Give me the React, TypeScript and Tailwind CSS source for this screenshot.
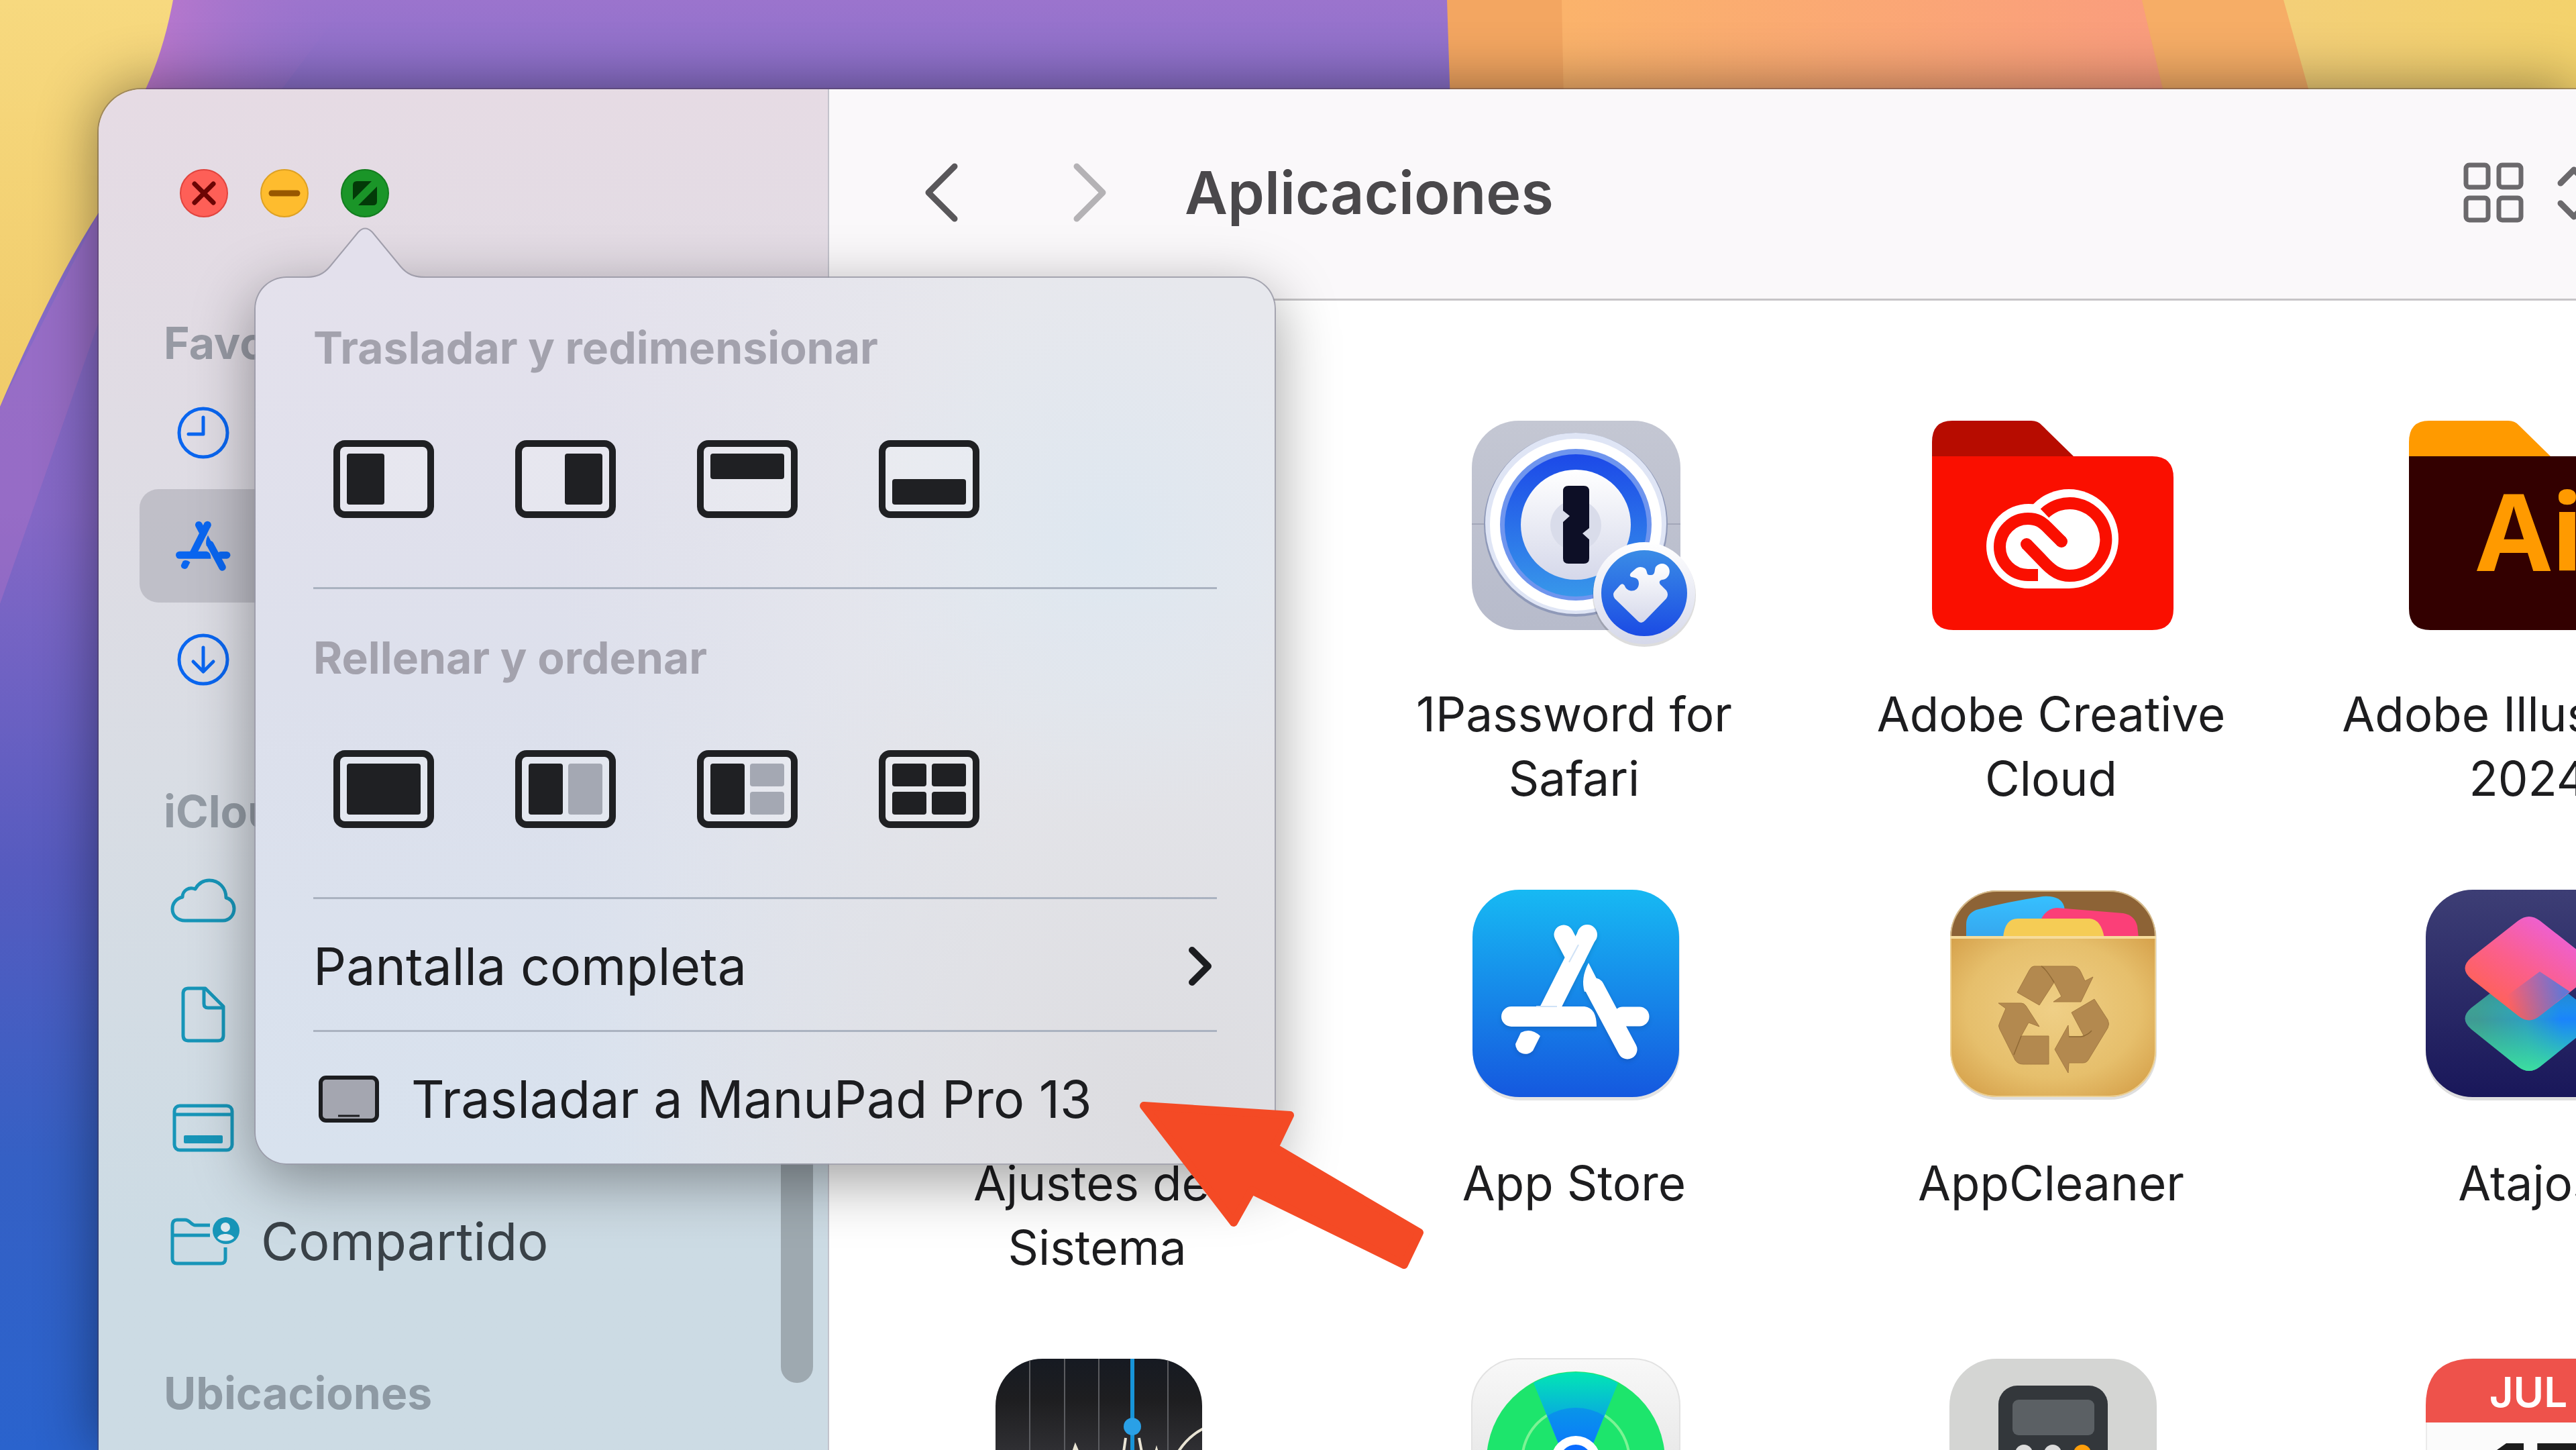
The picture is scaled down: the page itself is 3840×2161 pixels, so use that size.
import type { ReactNode } from 'react';

const sidebarFavorites = [
  { name: 'Recientes', icon: <ClockIcon />, active: false },
  { name: 'Aplicaciones', icon: <AppsIcon />, active: true },
  { name: 'Descargas', icon: <DownloadIcon />, active: false },
];

const sidebarCloud = [
  { name: 'iCloud Drive', icon: <CloudIcon /> },
  { name: 'Documentos', icon: <DocumentIcon /> },
  { name: 'Escritorio', icon: <DesktopIcon /> },
];

const apps: { name: string; icon: ReactNode }[] = [
  { name: '', icon: null },
  { name: '1Password for Safari', icon: <OnePasswordIcon /> },
  { name: 'Adobe Creative Cloud', icon: <CreativeCloudIcon /> },
  { name: 'Adobe Illustrator 2024', icon: <IllustratorIcon /> },
  { name: 'Ajustes del Sistema', icon: null },
  { name: 'App Store', icon: <AppStoreIcon /> },
  { name: 'AppCleaner', icon: <AppCleanerIcon /> },
  { name: 'Atajos', icon: <ShortcutsIcon /> },
  { name: 'Bolsa', icon: <StocksIcon /> },
  { name: 'Buscar', icon: <FindMyIcon /> },
  { name: 'Calculadora', icon: <CalculatorIcon /> },
  { name: 'Calendario', icon: <CalendarIcon /> },
];

// [x, y, width, height, dimmed]
type Pane = [number, number, number, number, boolean?];

const moveLayouts: { label: string; panes: Pane[] }[] = [
  { label: 'Izquierda', panes: [[20, 20, 56, 76]] },
  { label: 'Derecha', panes: [[74, 20, 56, 76]] },
  { label: 'Arriba', panes: [[20, 20, 110, 38]] },
  { label: 'Abajo', panes: [[20, 58, 110, 38]] },
];

const fillLayouts: { label: string; panes: Pane[] }[] = [
  { label: 'Rellenar', panes: [[20, 20, 110, 76]] },
  { label: 'Izquierda y derecha', panes: [[20, 20, 51, 76], [79, 20, 51, 76, true]] },
  { label: 'Izquierda y cuartos', panes: [[20, 20, 51, 76], [79, 20, 51, 34, true], [79, 62, 51, 34, true]] },
  { label: 'Cuartos', panes: [[20, 20, 51, 34], [79, 20, 51, 34], [20, 62, 51, 34], [79, 62, 51, 34]] },
];

function ClockIcon() {
  return (
    <svg viewBox="0 0 80 80" className="size-20" fill="none" stroke="#0a66f0" strokeWidth="5" strokeLinecap="round" strokeLinejoin="round">
      <circle cx="40" cy="40" r="36" />
      <path d="M40 17v25H18" />
    </svg>
  );
}

function AppsGlyph() {
  return (
    <>
      <path d="M162 67L180 101" stroke="currentColor" strokeWidth="29" strokeLinecap="round" />
      <path d="M197 67L137 186" stroke="currentColor" strokeWidth="29" />
      <circle cx="197" cy="67" r="15" fill="currentColor" />
      <path d="M208 146L257 238" stroke="currentColor" strokeWidth="29" strokeLinecap="round" />
      <path d="M199 109Q187 132 193 152L212 150L221 152Z" fill="currentColor" />
      <path d="M84 174H193Q211 176 211 204H84A15 15 0 0 1 84 174Z" fill="currentColor" />
      <path d="M250 189H275" stroke="currentColor" strokeWidth="29" strokeLinecap="round" />
      <path d="M98 213Q113 205 127 218L116 240A15 15 0 0 1 90 230Z" fill="currentColor" />
    </>
  );
}

function AppsIcon() {
  return (
    <svg viewBox="69 50 222 206" className="h-19 w-21 text-[#0a66f0]" fill="none">
      <AppsGlyph />
    </svg>
  );
}

function DownloadIcon() {
  return (
    <svg viewBox="0 0 80 80" className="size-20" fill="none" stroke="#0a66f0" strokeWidth="5" strokeLinecap="round" strokeLinejoin="round">
      <circle cx="40" cy="40" r="36" />
      <path d="M40 22v35M25 43l15 15 15-15" />
    </svg>
  );
}

function CloudIcon() {
  return (
    <svg viewBox="0 0 98 70" className="h-[70px] w-[98px]" fill="none" stroke="#1795b8" strokeWidth="5" strokeLinejoin="round">
      <path d="M22 64C10 64 3 56 3 47C3 38 9 31 18 29C18 19 28 13 37 17C42 8 50 4 58 4C72 4 83 15 83 30C91 32 95 39 95 46C95 56 88 64 78 64Z" />
    </svg>
  );
}

function DocumentIcon() {
  return (
    <svg viewBox="0 0 68 86" className="h-[86px] w-[68px]" fill="none" stroke="#1795b8" strokeWidth="5" strokeLinejoin="round">
      <path d="M12 4H37L64 31V74Q64 82 56 82H12Q4 82 4 74V12Q4 4 12 4Z" />
      <path d="M35 5V27Q35 33 41 33H63" />
    </svg>
  );
}

function DesktopIcon() {
  return (
    <svg viewBox="0 0 92 72" className="h-[72px] w-[92px]" fill="none" stroke="#1795b8" strokeWidth="5">
      <rect x="3" y="3" width="86" height="66" rx="8" />
      <path d="M3 16H89" />
      <rect x="17" y="47" width="58" height="12" rx="2" fill="#1795b8" stroke="none" />
    </svg>
  );
}

function SharedFolderIcon() {
  return (
    <svg viewBox="0 0 104 74" className="h-[74px] w-[104px]" fill="none" stroke="#1795b8" strokeWidth="5" strokeLinejoin="round">
      <path d="M60 13H38C32 13 30 5 23 5H11Q4 5 4 13V63Q4 70 11 70H76Q83 70 83 63V46" />
      <path d="M4 28H60" />
      <circle cx="84" cy="21" r="20" fill="#1795b8" stroke="none" />
      <circle cx="83" cy="16" r="7" fill="#dce8ee" stroke="none" />
      <path d="M71 32C74 24 92 24 96 32C90 38 77 38 71 32Z" fill="#dce8ee" stroke="none" />
    </svg>
  );
}

function LayoutIcon({ panes }: { panes: Pane[] }) {
  return (
    <svg viewBox="0 0 150 116" className="h-[116px] w-[150px]">
      <rect x="5" y="5" width="140" height="106" rx="12" fill="#ffffff33" stroke="#1f2023" strokeWidth="10" />
      {panes.map(([x, y, w, h, dim], i) => (
        <rect key={i} x={x} y={y} width={w} height={h} rx="4" fill={dim ? '#a4a8b3' : '#1f2023'} />
      ))}
    </svg>
  );
}

function AppCanvas({ children }: { children?: ReactNode }) {
  return (
    <svg viewBox="0 0 360 312" className="h-[312px] w-[360px] overflow-visible" fill="none">
      {children}
    </svg>
  );
}

function OnePasswordIcon() {
  return (
    <AppCanvas>
      <defs>
        <linearGradient id="op-bg" x1="0" y1="0" x2="0" y2="1">
          <stop offset="0" stopColor="#c4c7d3" />
          <stop offset="1" stopColor="#b7bbcb" />
        </linearGradient>
        <linearGradient id="op-ring" x1="0" y1="0" x2="0" y2="1">
          <stop offset="0" stopColor="#1c49e8" />
          <stop offset="1" stopColor="#3897ea" />
        </linearGradient>
        <linearGradient id="op-face" x1="0" y1="0" x2="0" y2="1">
          <stop offset="0" stopColor="#ffffff" />
          <stop offset="1" stopColor="#d5d8ea" />
        </linearGradient>
        <linearGradient id="op-badge" x1="0" y1="0" x2="0" y2="1">
          <stop offset="0" stopColor="#3a8ce6" />
          <stop offset="1" stopColor="#1b4be4" />
        </linearGradient>
      </defs>
      <rect x="25" y="0" width="311" height="312" rx="70" fill="url(#op-bg)" />
      <path d="M25 154H336" stroke="#a3a7b8" strokeWidth="2" />
      <circle cx="180" cy="155" r="137" fill="#8f99b8" />
      <circle cx="180" cy="153" r="135" fill="#dfe5f5" />
      <circle cx="180" cy="155" r="128" fill="#ffffff" />
      <circle cx="180" cy="155" r="113" fill="#6f95ee" />
      <circle cx="180" cy="156" r="106" fill="url(#op-ring)" />
      <circle cx="180" cy="155" r="82" fill="url(#op-face)" />
      <circle cx="180" cy="156" r="38" fill="#d9dcea" />
      <path
        d="M169 97H192Q200 97 200 105V160L190 168L200 177V205Q200 213 192 213H169Q161 213 161 205V151L171 142L161 134V105Q161 97 169 97Z"
        fill="#0d0f26"
      />
      <circle cx="282" cy="260" r="77" fill="#00000022" />
      <circle cx="282" cy="257" r="76" fill="url(#op-face)" />
      <circle cx="282" cy="257" r="64" fill="url(#op-badge)" />
      <path
        d="M272 298L238 265Q234 259 238 254L246 245Q250 241 253 246C256 256 273 257 274 243C274 234 268 234 263 233Q259 231 262 227L270 220Q276 216 283 220C288 225 284 231 292 230C299 230 297 222 299 218C304 212 312 211 317 217C323 224 319 236 309 237C303 238 304 243 308 246L315 253Q319 259 315 265L283 298Q277 304 272 298Z"
        fill="url(#op-face)"
      />
    </AppCanvas>
  );
}

function Folder({ tab, body, children }: { tab: string; body: string; children: ReactNode }) {
  return (
    <AppCanvas>
      <path d="M0 60V32Q0 0 30 0H148Q158 0 164 7L211 53V60Z" fill={tab} />
      <path d="M0 53H328Q360 53 360 85V280Q360 312 328 312H32Q0 312 0 280Z" fill={body} />
      {children}
    </AppCanvas>
  );
}

function CreativeCloudIcon() {
  return (
    <Folder tab="#b70c00" body="#fa0f00">
      <circle cx="204" cy="176" r="74" fill="#fff" />
      <circle cx="144" cy="187" r="63" fill="#fff" />
      <path d="M144 200H204V250H144Z" fill="#fff" />
      <path d="M168 138A54 54 0 1 1 205 231C190 231 180 224 170 214L141 184" stroke="#fa0f00" strokeWidth="18" />
      <path d="M158 230H143A42 42 0 0 1 143 146C157 146 164 151 172 159L193 180" stroke="#fa0f00" strokeWidth="18" />
      <circle cx="141" cy="184" r="9" fill="#fa0f00" />
      <circle cx="193" cy="180" r="9" fill="#fa0f00" />
    </Folder>
  );
}

function IllustratorIcon() {
  return (
    <Folder tab="#ff9a00" body="#330000">
      <text x="101" y="224" fill="#ff9a00" className="font-['Open_Sans',sans-serif] text-[160px] font-bold">
        Ai
      </text>
    </Folder>
  );
}

function AppStoreIcon() {
  return (
    <AppCanvas>
      <defs>
        <linearGradient id="as-bg" x1="0" y1="0" x2="0" y2="1">
          <stop offset="0" stopColor="#17b9f3" />
          <stop offset="1" stopColor="#1558df" />
        </linearGradient>
      </defs>
      <rect x="27" y="5" width="308" height="309" rx="70" fill="#0000001c" />
      <rect x="26" y="0" width="308" height="309" rx="70" fill="url(#as-bg)" />
      <g className="text-white drop-shadow-md">
        <AppsGlyph />
        <path d="M170 108L184 82M121 174H152" stroke="#cfe2f6" strokeWidth="2" />
      </g>
    </AppCanvas>
  );
}

function AppCleanerIcon() {
  return (
    <AppCanvas>
      <defs>
        <clipPath id="ac-clip">
          <rect x="27" y="1" width="307" height="308" rx="70" />
        </clipPath>
        <radialGradient id="ac-bag" cx="0.5" cy="0.45" r="0.7">
          <stop offset="0" stopColor="#efcf86" />
          <stop offset="0.6" stopColor="#e6bf6c" />
          <stop offset="1" stopColor="#d39c45" />
        </radialGradient>
        <linearGradient id="ac-blue" x1="0" y1="0" x2="0" y2="1">
          <stop offset="0" stopColor="#36c0ff" />
          <stop offset="1" stopColor="#36a6ee" />
        </linearGradient>
      </defs>
      <rect x="28" y="5" width="307" height="308" rx="70" fill="#00000020" />
      <g clipPath="url(#ac-clip)">
        <rect x="27" y="0" width="307" height="80" fill="#8d6336" />
        <path d="M51 72V52Q51 36 66 30Q112 18 165 10Q192 8 197 25L205 72Z" fill="url(#ac-blue)" />
        <path d="M160 50Q168 28 186 27L285 35Q302 38 306 54L308 72H160Z" fill="#fb3f78" />
        <path d="M106 72Q108 43 128 43H235Q252 44 257 72Z" fill="#f5cc55" />
        <rect x="27" y="69" width="307" height="243" fill="url(#ac-bag)" />
        <path d="M27 71H334" stroke="#f6dc9b" strokeWidth="4" />
      </g>
      <rect x="28" y="2" width="305" height="306" rx="69" stroke="#f3e0ae" strokeOpacity="0.7" strokeWidth="2" />
      <g fill="#b3894f" stroke="#a47a42" strokeWidth="1">
        <path d="M152 114H210Q218 114 222 123L228 136L240 130L222 167H181L193 159L182 138L160 172L127 153L145 120Q148 114 152 114Z" />
        <path d="M242 163L262 194Q265 200 262 206L234 252Q231 258 225 258H204L203 273L183 238L203 202L204 219H227L208 183Z" />
        <path d="M99 169H133Q137 169 140 173L160 204L144 198L133 218H174V260H136Q128 260 124 254L101 208Q98 203 101 198L110 177Z" />
      </g>
      <path d="M163 114Q170 118 182 138M133 218L122 246M204 219L222 219Q232 217 238 210" stroke="#8f6935" strokeWidth="1.5" />
    </AppCanvas>
  );
}

function ShortcutsIcon() {
  return (
    <AppCanvas>
      <defs>
        <linearGradient id="sc-bg" x1="0" y1="0" x2="0" y2="1">
          <stop offset="0" stopColor="#3d3e75" />
          <stop offset="1" stopColor="#19175a" />
        </linearGradient>
        <linearGradient id="sc-top" x1="0.1" y1="0.8" x2="0.7" y2="0.1">
          <stop offset="0" stopColor="#ff6250" />
          <stop offset="0.5" stopColor="#fb5f8c" />
          <stop offset="1" stopColor="#ee60d2" />
        </linearGradient>
        <linearGradient id="sc-low" x1="0.1" y1="0.5" x2="0.9" y2="0.4">
          <stop offset="0" stopColor="#3f9a94" />
          <stop offset="0.45" stopColor="#2f9fc0" />
          <stop offset="0.8" stopColor="#1a84fb" />
        </linearGradient>
        <linearGradient id="sc-green" x1="0" y1="0" x2="0" y2="1">
          <stop offset="0" stopColor="#33336e" stopOpacity="0.7" />
          <stop offset="0.5" stopColor="#34e09a" stopOpacity="0" />
          <stop offset="1" stopColor="#3ee59c" stopOpacity="0.9" />
        </linearGradient>
        <linearGradient id="sc-cross" x1="0.1" y1="0.5" x2="0.9" y2="0.4">
          <stop offset="0" stopColor="#5a6cc0" stopOpacity="0" />
          <stop offset="1" stopColor="#4a7be0" stopOpacity="0.85" />
        </linearGradient>
      </defs>
      <rect x="25" y="5" width="310" height="309" rx="70" fill="#00000022" />
      <rect x="25" y="0" width="310" height="309" rx="70" fill="url(#sc-bg)" />
      <path d="M163 122Q179 110 195 122L265 176Q284 192 265 208L195 264Q179 276 163 264L93 208Q74 192 93 176Z" fill="url(#sc-low)" />
      <path d="M163 122Q179 110 195 122L265 176Q284 192 265 208L195 264Q179 276 163 264L93 208Q74 192 93 176Z" fill="url(#sc-green)" />
      <path d="M163 46Q179 34 195 46L265 101Q284 117 265 133L195 188Q179 201 163 188L93 133Q74 117 93 101Z" fill="url(#sc-top)" />
      <path d="M195 122L240 152L195 188Q179 201 163 188L135 166Z" fill="url(#sc-cross)" />
    </AppCanvas>
  );
}

function StocksIcon() {
  return (
    <AppCanvas>
      <defs>
        <clipPath id="st-clip">
          <rect x="26" y="0" width="308" height="309" rx="70" />
        </clipPath>
        <linearGradient id="st-bg" x1="0" y1="0" x2="0" y2="1">
          <stop offset="0" stopColor="#161a22" />
          <stop offset="0.2" stopColor="#1e1e20" />
          <stop offset="0.6" stopColor="#3a3a3f" />
        </linearGradient>
      </defs>
      <g clipPath="url(#st-clip)">
        <rect x="26" y="0" width="308" height="309" fill="url(#st-bg)" />
        <path d="M77 0V309M129 0V309M180 0V309M283 0V309" stroke="#5b5c60" strokeWidth="2" />
        <path d="M230 0V309" stroke="#1794d8" strokeWidth="6" />
        <path d="M135 160L145 130L158 160M214 160L220 118M240 118L248 160M262 150L266 136L270 150M292 150Q308 118 336 104" stroke="#e9e4d4" strokeWidth="4" />
        <circle cx="230" cy="101" r="13" fill="#2aa0e6" />
      </g>
    </AppCanvas>
  );
}

function FindMyIcon() {
  return (
    <AppCanvas>
      <defs>
        <linearGradient id="fm-bg" x1="0" y1="0" x2="0" y2="1">
          <stop offset="0" stopColor="#f8f8f8" />
          <stop offset="1" stopColor="#d8d8d8" />
        </linearGradient>
        <linearGradient id="fm-beam" x1="0" y1="0" x2="0" y2="1">
          <stop offset="0" stopColor="#02e6b4" />
          <stop offset="0.5" stopColor="#0a9bea" />
          <stop offset="0.8" stopColor="#0a6cff" />
        </linearGradient>
      </defs>
      <rect x="25" y="0" width="310" height="309" rx="70" fill="url(#fm-bg)" stroke="#e2e2e2" strokeWidth="2" />
      <circle cx="180" cy="152" r="133" fill="#1de56c" />
      <circle cx="180" cy="152" r="80" stroke="#7cf394" strokeWidth="4" />
      <path d="M180 190L117 36A133 133 0 0 1 243 36Z" fill="url(#fm-beam)" />
      <path d="M180 190L138 85A80 80 0 0 1 222 85Z" fill="#0a6cff" fillOpacity="0.45" />
      <circle cx="180" cy="152" r="37" fill="#fff" />
      <circle cx="180" cy="152" r="24" fill="#0a6cff" />
    </AppCanvas>
  );
}

function CalculatorIcon() {
  return (
    <AppCanvas>
      <rect x="26" y="0" width="309" height="309" rx="70" fill="#d4d5d3" />
      <rect x="99" y="40" width="163" height="260" rx="28" fill="#33373b" />
      <rect x="120" y="61" width="122" height="53" rx="9" fill="#5b6064" />
      <circle cx="137" cy="141" r="13" fill="#dcdcdc" />
      <circle cx="180" cy="141" r="13" fill="#dcdcdc" />
      <circle cx="224" cy="141" r="13" fill="#ff9f0a" />
    </AppCanvas>
  );
}

function CalendarIcon() {
  return (
    <AppCanvas>
      <rect x="26" y="0" width="309" height="309" rx="70" fill="#fbfbfb" stroke="#d9d9d9" strokeWidth="1" />
      <path d="M25 95V70Q25 0 95 0H265Q335 0 335 70V95Z" fill="#ee524b" />
      <text x="178" y="72" textAnchor="middle" fill="#fff" className="text-[62px] font-semibold">
        JUL
      </text>
      <text x="108" y="257" fill="#1c1c1c" className="text-[180px] font-semibold">
        17
      </text>
    </AppCanvas>
  );
}

function Wallpaper() {
  return (
    <svg viewBox="0 0 3840 2161" preserveAspectRatio="xMidYMin slice" className="absolute inset-0 size-full">
      <defs>
        <linearGradient id="wp-blue" x1="0" y1="0" x2="0" y2="1">
          <stop offset="0" stopColor="#9b74cd" />
          <stop offset="0.07" stopColor="#886fca" />
          <stop offset="0.35" stopColor="#8568c6" />
          <stop offset="0.6" stopColor="#565bbf" />
          <stop offset="0.8" stopColor="#3560c4" />
          <stop offset="1" stopColor="#2a63cd" />
        </linearGradient>
        <linearGradient id="wp-edge" x1="0" y1="0" x2="1" y2="0">
          <stop offset="0" stopColor="#c078cc" stopOpacity="0.9" />
          <stop offset="1" stopColor="#9b74cd" stopOpacity="0" />
        </linearGradient>
        <linearGradient id="wp-yellow" x1="0" y1="0" x2="0" y2="1">
          <stop offset="0" stopColor="#f7d97f" />
          <stop offset="1" stopColor="#f0cb6a" />
        </linearGradient>
        <linearGradient id="wp-orange" x1="0" y1="0" x2="1" y2="0">
          <stop offset="0" stopColor="#fbb36b" />
          <stop offset="1" stopColor="#fa9c7e" />
        </linearGradient>
        <linearGradient id="wp-right" x1="0" y1="0" x2="1" y2="0">
          <stop offset="0" stopColor="#f3cf78" />
          <stop offset="1" stopColor="#f3d26c" />
        </linearGradient>
      </defs>
      <rect width="3840" height="2161" fill="url(#wp-blue)" />
      <path d="M258 0H520L420 133H217Z" fill="url(#wp-edge)" />
      <path d="M147 317V480Q70 700 0 900V606Z" fill="#a86fc6" fillOpacity="0.5" />
      <path d="M0 0H258Q244 75 217 133Q190 230 147 317Q80 420 0 606Z" fill="url(#wp-yellow)" />
      <path d="M2157 0H3840V400H2170Z" fill="#f3a661" />
      <path d="M2328 0H3193L3240 200H2332Z" fill="url(#wp-orange)" />
      <path d="M3193 0H3404L3460 200H3240Z" fill="#f6ad66" />
      <path d="M3404 0H3840V200H3460Z" fill="url(#wp-right)" />
    </svg>
  );
}

function TrafficLights() {
  return (
    <div className="flex gap-12 pt-[119px] pl-[121px]">
      <button aria-label="Cerrar" className="size-18">
        <svg viewBox="0 0 72 72" className="size-18">
          <circle cx="36" cy="36" r="35" fill="#fe5f57" stroke="#e0443e" strokeWidth="2" />
          <path d="M22 22L50 50M50 22L22 50" stroke="#6c0504" strokeWidth="7" strokeLinecap="round" />
        </svg>
      </button>
      <button aria-label="Minimizar" className="size-18">
        <svg viewBox="0 0 72 72" className="size-18">
          <circle cx="36" cy="36" r="35" fill="#febc2e" stroke="#dea123" strokeWidth="2" />
          <path d="M17 36H55" stroke="#985700" strokeWidth="9" strokeLinecap="round" />
        </svg>
      </button>
      <button aria-label="Zoom" className="size-18">
        <svg viewBox="0 0 72 72" className="size-18">
          <circle cx="36" cy="36" r="35" fill="#1a9528" stroke="#137c1f" strokeWidth="2" />
          <path d="M18 46V24Q18 18 24 18H46Z" fill="#033a08" />
          <path d="M54 26V48Q54 54 48 54H26Z" fill="#033a08" />
        </svg>
      </button>
    </div>
  );
}

function SidebarHeading({ children }: { children: ReactNode }) {
  return <h2 className="mb-[9px] pl-[97px] text-[66px] leading-20 font-bold text-[#5b6470]/55">{children}</h2>;
}

function Sidebar() {
  return (
    <aside className="relative w-[1089px] shrink-0 overflow-hidden border-r-2 border-[#c3c3cc] bg-linear-to-b from-[#e6dbe4] via-[#d9dde4] via-50% to-[#ccdbe4] to-85%">
      <TrafficLights />
      <nav className="mt-[147px]">
        <SidebarHeading>Favoritos</SidebarHeading>
        {sidebarFavorites.map((item) => (
          <a
            key={item.name}
            href="#"
            aria-label={item.name}
            className={`mx-[61px] flex h-[169px] items-center rounded-[28px] pl-[45px] ${item.active ? 'bg-[#4b4b5a]/20' : ''}`}
          >
            <span className="flex w-25 justify-center">{item.icon}</span>
          </a>
        ))}
        <div className="h-[102px]" />
        <SidebarHeading>iCloud</SidebarHeading>
        {sidebarCloud.map((item) => (
          <a key={item.name} href="#" aria-label={item.name} className="mx-[61px] flex h-[169px] items-center pl-[45px]">
            <span className="flex w-25 justify-center">{item.icon}</span>
          </a>
        ))}
        <a href="#" className="mx-[61px] flex h-[169px] items-center gap-8 pl-[45px] text-[77px] leading-[92px] text-[#3a4248]">
          <SharedFolderIcon />
          Compartido
        </a>
        <div className="h-[102px]" />
        <SidebarHeading>Ubicaciones</SidebarHeading>
      </nav>
      <div className="absolute top-[900px] right-[22px] h-[1028px] w-12 rounded-full bg-[#9ea9b0]" />
    </aside>
  );
}

function Toolbar() {
  return (
    <header className="flex h-[315px] items-center border-b-3 border-[#c6c4c7] bg-[#faf8fa] pb-1 pl-[138px]">
      <button aria-label="Atrás">
        <svg viewBox="0 0 60 96" className="h-24 w-15" fill="none" stroke="#59575a" strokeWidth="9" strokeLinecap="round" strokeLinejoin="round">
          <path d="M49 9L10 48L49 87" />
        </svg>
      </button>
      <button aria-label="Adelante" className="ml-40">
        <svg viewBox="0 0 60 96" className="h-24 w-15" fill="none" stroke="#b4b2b5" strokeWidth="9" strokeLinecap="round" strokeLinejoin="round">
          <path d="M11 9L50 48L11 87" />
        </svg>
      </button>
      <h1 className="ml-28 flex-1 text-[88px] leading-24 font-semibold text-[#4a484b]">Aplicaciones</h1>
      <button aria-label="Vista" className="-mr-[22px] flex items-center gap-12">
        <svg viewBox="0 0 90 90" className="size-[90px]" fill="none" stroke="#6b696c" strokeWidth="7">
          <rect x="4" y="4" width="33" height="33" rx="5" />
          <rect x="53" y="4" width="33" height="33" rx="5" />
          <rect x="4" y="53" width="33" height="33" rx="5" />
          <rect x="53" y="53" width="33" height="33" rx="5" />
        </svg>
        <svg viewBox="0 0 52 90" className="h-[90px] w-[52px]" fill="none" stroke="#6b696c" strokeWidth="9" strokeLinecap="round" strokeLinejoin="round">
          <path d="M7 31L27 11L47 31M7 61L27 81L47 61" />
        </svg>
      </button>
    </header>
  );
}

function AppGrid() {
  return (
    <ul className="grid grid-cols-[repeat(4,711px)] auto-rows-[699px] pt-[179px] pl-[46px]">
      {apps.map((app, i) => (
        <li key={i} className="flex flex-col items-center gap-[77px]">
          {app.icon ?? <AppCanvas />}
          <span className="w-[600px] pr-1 text-center text-[71px] leading-24 text-[#1d1d1f]">{app.name}</span>
        </li>
      ))}
    </ul>
  );
}

function LayoutRow({ title, layouts }: { title: string; layouts: { label: string; panes: Pane[] }[] }) {
  return (
    <section className="border-b-3 border-[#aab2c0] pt-[62px] pb-[103px]">
      <h3 className="mb-[98px] text-[66px] leading-20 font-bold text-[#a3a2ad]">{title}</h3>
      <div className="flex gap-[121px] pl-[30px]">
        {layouts.map((layout) => (
          <button key={layout.label} aria-label={layout.label}>
            <LayoutIcon panes={layout.panes} />
          </button>
        ))}
      </div>
    </section>
  );
}

function ZoomMenu() {
  return (
    <div className="absolute top-[279px] left-[232px] w-[1523px] rounded-[48px] border-2 border-[#8f8f9c]/80 bg-[radial-gradient(circle_at_84%_30%,#dee7f0_0,#dee7f000_26%),radial-gradient(circle_at_90%_95%,#dcdce0_0,#dcdce000_45%),linear-gradient(to_right,#e3e1ec00_30%,#e7e8ed_75%),linear-gradient(to_bottom,#e4e1ec,#dde0ec_45%,#d8e2ee)] bg-clip-padding px-[86px] pt-[2px] shadow-[0_24px_90px_rgba(0,0,0,0.38)]">
      <svg viewBox="0 0 178 82" className="absolute -top-[79px] left-[75px] h-[82px] w-[178px]" fill="none">
        <path d="M0 79C16 79 26 74 36 62L78 11Q88 0 99 11L141 62C151 74 161 79 178 79V82H0Z" fill="#e3e0ec" />
        <path d="M0 78C16 78 26 74 36 62L78 11Q88 0 99 11L141 62C151 74 161 78 178 78" stroke="#a09eab" strokeWidth="2" />
      </svg>
      <LayoutRow title="Trasladar y redimensionar" layouts={moveLayouts} />
      <LayoutRow title="Rellenar y ordenar" layouts={fillLayouts} />
      <button className="flex w-full items-center justify-between border-b-3 border-[#aab2c0] pt-[54px] pb-[49px] text-[77px] leading-[92px] text-[#1c1d20]">
        Pantalla completa
        <svg viewBox="0 0 50 64" className="h-16 w-[50px]" fill="none" stroke="#1c1d20" strokeWidth="10" strokeLinecap="round" strokeLinejoin="round">
          <path d="M13 8L37 32L13 56" />
        </svg>
      </button>
      <button className="flex w-full items-center gap-12 pt-[54px] pb-[50px] pl-2 text-[77px] leading-[92px] text-[#1c1d20]">
        <svg viewBox="0 0 90 70" className="h-[70px] w-[90px]">
          <rect x="3" y="3" width="84" height="64" rx="8" fill="#a4a6b0" stroke="#1c1d20" strokeWidth="6" />
          <path d="M29 60H61" stroke="#1c1d20" strokeWidth="3" />
        </svg>
        Trasladar a ManuPad Pro 13
      </button>
    </div>
  );
}

export default function App() {
  return (
    <div className="relative h-screen overflow-hidden pt-[133px] pl-[147px] font-[Inter,sans-serif]">
      <Wallpaper />
      <div className="relative flex h-full rounded-tl-[64px] shadow-[0_0_90px_rgba(0,0,0,0.45),0_0_0_2px_rgba(90,70,90,0.35)]">
        <div className="flex h-full w-full overflow-hidden rounded-tl-[64px]">
          <Sidebar />
          <main className="min-w-0 flex-1 overflow-hidden bg-white">
            <Toolbar />
            <AppGrid />
          </main>
        </div>
        <ZoomMenu />
        <svg viewBox="0 0 440 270" className="absolute top-[1498px] left-[1545px] h-[270px] w-[440px]">
          <path
            d="M13 17L231 31L208 79L424 206L401 254L174 143L147 191Z"
            fill="#f44a25"
            stroke="#f44a25"
            strokeWidth="12"
            strokeLinejoin="round"
          />
        </svg>
      </div>
    </div>
  );
}
